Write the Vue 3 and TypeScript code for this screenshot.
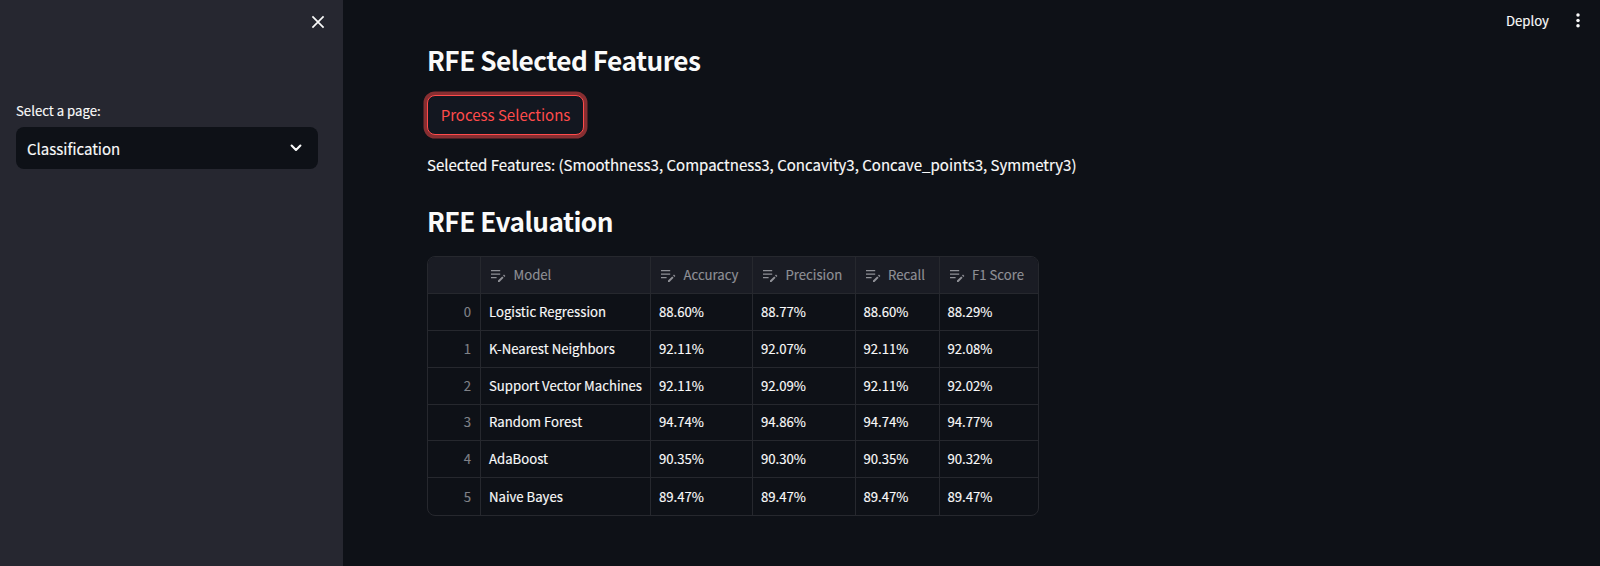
<script setup lang="ts">
interface Row {
  model: string
  accuracy: string
  precision: string
  recall: string
  f1: string
}

const columns: string[] = ['Model', 'Accuracy', 'Precision', 'Recall', 'F1 Score']

const rows: Row[] = [
  { model: 'Logistic Regression', accuracy: '88.60%', precision: '88.77%', recall: '88.60%', f1: '88.29%' },
  { model: 'K-Nearest Neighbors', accuracy: '92.11%', precision: '92.07%', recall: '92.11%', f1: '92.08%' },
  { model: 'Support Vector Machines', accuracy: '92.11%', precision: '92.09%', recall: '92.11%', f1: '92.02%' },
  { model: 'Random Forest', accuracy: '94.74%', precision: '94.86%', recall: '94.74%', f1: '94.77%' },
  { model: 'AdaBoost', accuracy: '90.35%', precision: '90.30%', recall: '90.35%', f1: '90.32%' },
  { model: 'Naive Bayes', accuracy: '89.47%', precision: '89.47%', recall: '89.47%', f1: '89.47%' },
]
</script>

<template>
  <div class="app">
    <aside class="sidebar">
      <div class="sidebar-top">
        <button class="icon-button" aria-label="Close sidebar">
          <svg width="14" height="14" viewBox="0 0 14 14">
            <path d="M1.4 1.4 12.6 12.6M12.6 1.4 1.4 12.6" fill="none" stroke="#fafafa" stroke-width="1.7" />
          </svg>
        </button>
      </div>
      <label class="select-label">Select a page:</label>
      <div class="select">
        <span>Classification</span>
        <svg width="12" height="8" viewBox="0 0 12 8">
          <path d="M1.6 1.6 6 6 10.4 1.6" fill="none" stroke="#fafafa" stroke-width="2.1" stroke-linecap="round" stroke-linejoin="round" />
        </svg>
      </div>
    </aside>

    <main class="content">
      <h2 class="title">RFE Selected Features</h2>
      <button class="process">Process Selections</button>
      <p class="features">Selected Features: (Smoothness3, Compactness3, Concavity3, Concave_points3, Symmetry3)</p>
      <h2 class="title">RFE Evaluation</h2>
      <div class="table">
        <div class="row head">
          <div class="cell"></div>
          <div v-for="name in columns" :key="name" class="cell">
            <svg class="edit" width="16" height="14" viewBox="0 0 16 14">
              <path d="M1 1.7H10.2M1 5.2H10.2M1 8.7H6.6" fill="none" stroke="currentColor" stroke-width="1.3" />
              <path d="M8 13 8 11.5 12.2 7.4 13.6 8.8 9.5 13ZM13 6.6 14 5.6 15.4 7 14.4 8Z" fill="currentColor" />
            </svg>
            <span>{{ name }}</span>
          </div>
        </div>
        <div v-for="(row, index) in rows" :key="row.model" class="row">
          <div class="cell index">{{ index }}</div>
          <div class="cell">{{ row.model }}</div>
          <div class="cell">{{ row.accuracy }}</div>
          <div class="cell">{{ row.precision }}</div>
          <div class="cell">{{ row.recall }}</div>
          <div class="cell">{{ row.f1 }}</div>
        </div>
      </div>
    </main>

    <header class="toolbar">
      <span>Deploy</span>
      <svg width="4" height="15" viewBox="0 0 4 15" fill="#fafafa">
        <circle cx="2" cy="2" r="1.75" />
        <circle cx="2" cy="7.4" r="1.75" />
        <circle cx="2" cy="12.8" r="1.75" />
      </svg>
    </header>
  </div>
</template>

<style>
body {
  background: #0e1117;
}
</style>

<style scoped>
.app {
  display: flex;
  height: 566px;
  overflow: hidden;
  background: #0e1117;
  color: #fafafa;
  font-family: "Noto Sans CJK SC", "Noto Sans", sans-serif;
  font-size: 15.03px;
  -webkit-text-stroke: 0.15px currentColor;
}
.app * {
  box-sizing: border-box;
}
button {
  font: inherit;
}
.sidebar {
  flex: 0 0 343px;
  padding: 0 25px 0 16px;
  background: #262730;
}
.sidebar-top {
  display: flex;
  justify-content: flex-end;
  height: 100px;
  padding-top: 15px;
}
.icon-button {
  width: 14px;
  height: 14px;
  margin-right: -7px;
  padding: 0;
  border: 0;
  background: none;
  display: flex;
}
.select-label {
  display: block;
  height: 27px;
  line-height: 21px;
  font-size: 13.2px;
}
.select {
  display: flex;
  align-items: center;
  justify-content: space-between;
  height: 42px;
  padding: 0 16px 0 11px;
  border-radius: 8px;
  background: #0e1117;
}
.content {
  flex: 1;
  padding: 41px 0 0 84px;
}
.title {
  margin: 0;
  height: 36px;
  line-height: 38px;
  font-size: 26.2px;
  font-weight: 600;
  letter-spacing: -0.5px;
  white-space: nowrap;
  -webkit-text-stroke: 0;
}
.process {
  display: block;
  width: 157px;
  height: 40px;
  margin: 18px 0 0;
  padding: 0 0 2px;
  border: 1px solid #ff4b4b;
  border-radius: 8px;
  background: #131720;
  box-shadow: 0 0 0 3.5px rgba(255, 75, 75, 0.5);
  color: #ff4b4b;
  -webkit-text-stroke: 0;
}
.features {
  margin: 17px 0 24px;
  height: 26px;
  line-height: 26px;
  white-space: nowrap;
}
.title + .table {
  margin-top: 18px;
}
.table {
  width: 612px;
  height: 260px;
  border: 1px solid #26282e;
  border-radius: 8px;
  overflow: hidden;
  font-size: 13.17px;
}
.row {
  display: grid;
  grid-template-columns: 53px 170px 102px 102.5px 84px 98.5px;
  height: 36.8px;
}
.row:not(:last-child) {
  border-bottom: 1px solid #26282e;
}
.head {
  height: 37.2px;
  background: #1a1c24;
  color: #8f9096;
}
.cell {
  display: flex;
  align-items: center;
  padding: 0 0 1px 8px;
  border-right: 1px solid #26282e;
  white-space: nowrap;
}
.cell:last-child {
  border-right: 0;
}
.index {
  justify-content: flex-end;
  padding-right: 9px;
  color: #808288;
}
.edit {
  margin: 2px 7.5px 0 1px;
}
.toolbar {
  position: absolute;
  top: 0;
  right: 20px;
  display: flex;
  align-items: center;
  gap: 27px;
  height: 40px;
  font-size: 13.2px;
}
</style>
